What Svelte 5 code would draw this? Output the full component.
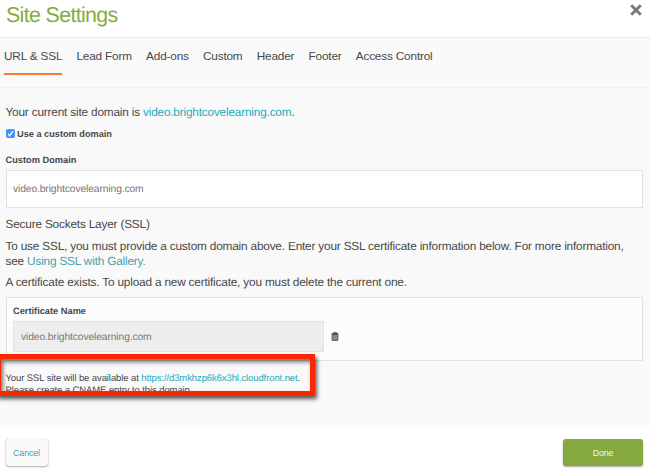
<script>
  const tabs = ['URL & SSL', 'Lead Form', 'Add-ons', 'Custom', 'Header', 'Footer', 'Access Control'];
  let active = $state(0);
  let custom = $state(true);
</script>

<div class="dialog">
  <header>
    <h1>Site Settings</h1>
    <button class="close" aria-label="Close">
      <svg width="12" height="12" viewBox="0 0 12 12"><path d="M2.2 2.2 9.8 9.8M9.8 2.2 2.2 9.8" stroke="#777" stroke-width="2.8" stroke-linecap="square" /></svg>
    </button>
  </header>

  <nav>
    {#each tabs as tab, i}
      <button class="tab" class:active={i === active} onclick={() => (active = i)}>{tab}</button>
    {/each}
  </nav>

  <main>
    <p class="domain">Your current site domain is <a class="bright" href="#domain">video.brightcovelearning.com</a>.</p>
    <button class="check" onclick={() => (custom = !custom)}>
      <span class="box">
        {#if custom}
          <svg width="9" height="9" viewBox="0 0 8 8"><path d="M1.8 4.3 3.3 6 6.2 1.9" fill="none" stroke="#fff" stroke-width="1.2" /></svg>
        {/if}
      </span>
      <span>Use a custom domain</span>
    </button>
    <div class="label main-label">Custom Domain</div>
    <div class="field">video.brightcovelearning.com</div>
    <p class="ssl">Secure Sockets Layer (SSL)</p>
    <p class="info">To use SSL, you must provide a custom domain above. Enter your SSL certificate information below. For more information,<br />see <a href="#ssl">Using SSL with Gallery.</a></p>
    <p class="exists">A certificate exists. To upload a new certificate, you must delete the current one.</p>

    <section class="cert">
      <div class="label">Certificate Name</div>
      <div class="row">
        <div class="field disabled">video.brightcovelearning.com</div>
        <svg width="8" height="9" viewBox="0 0 8 9">
          <path d="M2.5 1.5V.7h3v.8M.5 1.7h7M1.2 2.5h5.6v5.8H1.2z" fill="#999" stroke="#4c4c4c" />
          <path d="M3 3v5M5 3v5" stroke="#777" stroke-width=".7" />
        </svg>
      </div>
    </section>

    <div class="notice">
      Your SSL site will be available at <a class="bright" href="#cloudfront">https://d3mkhzp6k6x3hl.cloudfront.net</a>.<br />Please create a CNAME entry to this domain.
    </div>
    <div class="highlight"></div>
  </main>

  <footer>
    <button class="cancel">Cancel</button>
    <button class="done">Done</button>
  </footer>
</div>

<style>
  :global(body) { margin: 0; background: #fff; }
  .dialog {
    width: 650px; height: 473px; overflow: hidden;
    display: flex; flex-direction: column;
    font-family: "Liberation Sans", Arial, sans-serif;
    font-size: 11.8px; letter-spacing: -.18px; color: #484848; background: #fff;
    text-rendering: geometricPrecision;
  }
  button { font: inherit; letter-spacing: inherit; border: 0; padding: 0; margin: 0; background: none; color: inherit; }
  p { margin: 0; white-space: nowrap; }
  a { color: #46a1ad; text-decoration: none; }
  a.bright { color: #22adbd; }
  header {
    box-sizing: border-box; height: 38px; flex: none;
    display: flex; justify-content: space-between; align-items: flex-start;
    padding: 0 8px 0 6px; border-bottom: 1px solid #e8e8e8;
  }
  h1 { margin: 2px 0 0; font-size: 21.4px; line-height: 26px; font-weight: 400; letter-spacing: -.65px; color: #86ab3e; }
  .close { height: 12px; margin-top: 4px; line-height: 0; }
  nav {
    box-sizing: border-box; height: 50px; flex: none;
    display: flex; align-items: flex-start; gap: 14.2px; padding: 0 4px;
    background: #f9f9f9; border-bottom: 1px solid #f0f0f0;
  }
  .tab { box-sizing: border-box; height: 37px; padding-top: 1px; border-bottom: 2px solid transparent; white-space: nowrap; }
  .tab.active { border-color: #f47a31; }
  main { position: relative; height: 339px; flex: none; background: #f9f9f9; padding: 16px 7px 0 6px; box-sizing: border-box; }
  p, .label, .notice { margin-left: -.5px; }
  .domain { line-height: 16px; }
  .check {
    display: flex; align-items: center; gap: 2px; height: 11px; margin-top: 8px;
    font-size: 9.2px; letter-spacing: 0; font-weight: 700;
  }
  .box { width: 9px; height: 9px; border-radius: 2px; background: #3b96f8; display: flex; }
  .label { font-size: 9.25px; letter-spacing: 0; line-height: 12px; font-weight: 700; }
  .main-label { margin-top: 15px; }
  .field {
    box-sizing: border-box; height: 38px; border: 1px solid #e1e1e1; background: #fff;
    display: flex; align-items: center; padding: 1px 7px 0 6px; font-size: 10.3px; letter-spacing: -.12px; color: #777;
  }
  .main-label + .field { margin-top: 4px; }
  .ssl { margin-top: 9px; line-height: 15px; }
  .info { margin-top: 7px; line-height: 14.5px; }
  .exists { margin-top: 7px; line-height: 14px; }
  .cert {
    box-sizing: border-box; height: 64px; margin-top: 8px; padding: 7px 7px 7px 6px;
    border: 1px solid #e1e1e1; background: #fcfcfc;
  }
  .cert .label { margin-left: 0; }
  .row { display: flex; align-items: center; gap: 7px; margin-top: 4px; }
  .disabled { width: 311px; height: 31px; background: #eee; padding-left: 7px; }
  .notice { height: 22px; margin-top: 11.5px; overflow: hidden; font-size: 9.5px; letter-spacing: -.1px; line-height: 12.5px; white-space: nowrap; }
  .highlight {
    position: absolute; left: -4px; top: 266px; width: 319px; height: 42px; box-sizing: border-box;
    border: 5px solid #fe2600;
    box-shadow: 2px 3px 4px rgba(0, 0, 0, .65), inset 2px 3px 4px rgba(0, 0, 0, .55);
  }
  footer { flex: 1; display: flex; justify-content: space-between; align-items: flex-start; padding: 12px 7px 0 6px; font-size: 8.8px; letter-spacing: -.1px; }
  .cancel, .done { height: 27px; border-radius: 3px; }
  .cancel { width: 42px; padding-right: 1px; background: #fafafa; color: #46a1ad; box-shadow: 0 0 1px rgba(0, 0, 0, .3), 0 1px 2px rgba(0, 0, 0, .3); }
  .done { width: 80px; background: #86a93f; color: #f5f8ed; box-shadow: 0 1px 2px rgba(0, 0, 0, .35); }
</style>
